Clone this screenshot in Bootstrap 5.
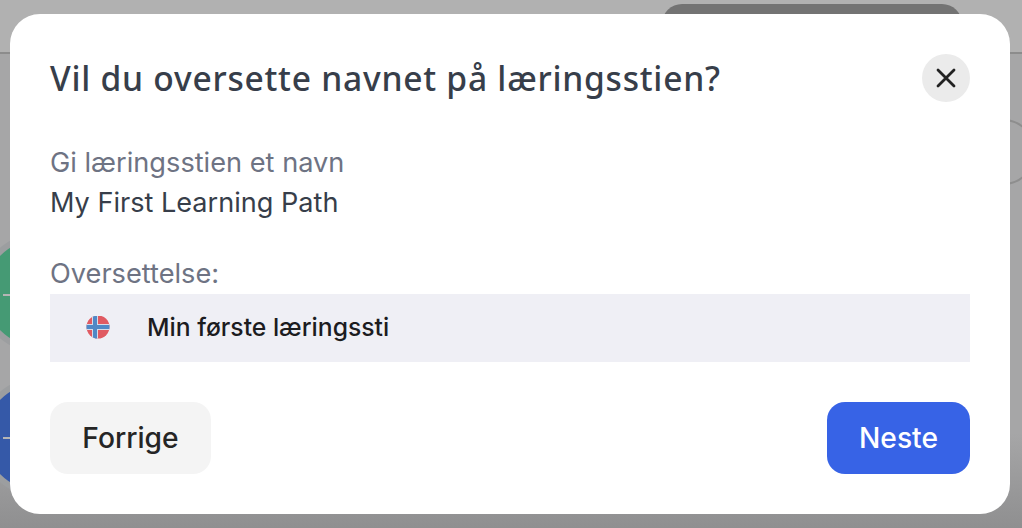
<!DOCTYPE html>
<html lang="no">
<head>
<meta charset="utf-8">
<title>Oversett navn</title>
<link href="https://cdn.jsdelivr.net/npm/bootstrap@5.3.0/dist/css/bootstrap.min.css" rel="stylesheet">
<style>
html,body{height:528px;overflow:hidden}
body{background:#a9a9aa;font-family:Inter,"Liberation Sans",sans-serif;position:relative}
.bg-top{position:absolute;left:0;right:0;top:0;height:52px;background:#b1b1b1;border-bottom:2px solid #8c8c8c;box-sizing:content-box}
.bg-fade{position:absolute;left:0;right:0;top:54px;bottom:0;background:linear-gradient(#a6a6a7,#a6a6a7 80%,#8f8f90)}
.bg-pill{position:absolute;left:662px;top:4px;width:300px;height:44px;border-radius:20px;background:#737373}
.bg-node{position:absolute;border-radius:50%;box-sizing:content-box}
.n-green{left:-21px;top:234px;width:106px;height:106px;background:#459a74;border:6px solid #9c9ea0}
.n-blue{left:-21px;top:378px;width:106px;height:106px;background:#3559a8;border:6px solid #9c9ea0}
.n-ring{left:970px;top:119px;width:62px;height:62px;border:2px solid #8e8e8e}
.bg-tick{position:absolute;left:3px;width:7px;height:2px;background:#b5b5b5}
.dlg{position:relative;margin:14px 12px 0 10px;height:500px;border:0;border-radius:30px;padding:40px;background:#fff}
.dlg-title{font-family:"Noto Sans",sans-serif;font-weight:500;font-size:33.6px;line-height:48px;letter-spacing:.75px;color:#373e4a;margin:0}
.dlg-close{width:48px;height:48px;background:#ebebeb;border:0;border-radius:50%;padding:0;color:#222}
.lbl{font-size:27.2px;line-height:40px;color:#6e7383}
.val{font-size:27.1px;line-height:40px;color:#373e4a}
.tr-row{height:68px;background:#efeff5;padding-left:36px;gap:37px}
.tr-text{font-size:24.7px;font-weight:500;color:#1c1c1f}
.act{height:72px;border:0;border-radius:18px;font-size:28.2px;font-weight:500}
.act-prev{width:161px;background:#f4f4f4;color:#252525}
.act-next{width:143px;background:#3763e6;color:#fff}
.act-next:hover{background:#3763e6;color:#fff}
.act-prev:hover{background:#f4f4f4;color:#252525}
.gap-a{margin-top:41px}
.gap-b{margin-top:31px}
.gap-c{margin-top:40px}
</style>
</head>
<body>
<div class="bg-top"></div>
<div class="bg-fade"></div>
<div class="bg-pill"></div>
<div class="bg-node n-green"></div>
<div class="bg-tick" style="top:294px"></div>
<div class="bg-node n-blue"></div>
<div class="bg-tick" style="top:437px"></div>
<div class="bg-node n-ring"></div>

<div class="dlg d-flex flex-column">
  <div class="d-flex justify-content-between align-items-center">
    <h1 class="dlg-title">Vil du oversette navnet på læringsstien?</h1>
    <button type="button" class="dlg-close d-flex align-items-center justify-content-center" aria-label="Lukk">
      <svg width="22" height="22" viewBox="0 0 22 22" fill="none" stroke="currentColor" stroke-width="2.8" stroke-linecap="round"><path d="M3 3L19 19M19 3L3 19"/></svg>
    </button>
  </div>
  <div class="lbl gap-a">Gi læringsstien et navn</div>
  <div class="val">My First Learning Path</div>
  <div class="lbl gap-b">Oversettelse:</div>
  <div class="tr-row d-flex align-items-center">
    <svg width="24" height="24" viewBox="0 0 24 24"><defs><clipPath id="fc"><circle cx="12" cy="11" r="11.5"/></clipPath></defs><g clip-path="url(#fc)"><rect y="-1" width="24" height="24" fill="#e05a62"/><rect x="6" y="-1" width="6" height="24" fill="#d5dbe9"/><rect y="8" width="24" height="6" fill="#d5dbe9"/><rect x="7" y="-1" width="4" height="24" fill="#5088c6"/><rect y="9" width="24" height="4" fill="#5088c6"/></g></svg>
    <span class="tr-text">Min første læringssti</span>
  </div>
  <div class="d-flex justify-content-between gap-c">
    <button type="button" class="btn act act-prev">Forrige</button>
    <button type="button" class="btn act act-next">Neste</button>
  </div>
</div>
<script src="https://cdn.jsdelivr.net/npm/bootstrap@5.3.0/dist/js/bootstrap.bundle.min.js"></script>
</body>
</html>
